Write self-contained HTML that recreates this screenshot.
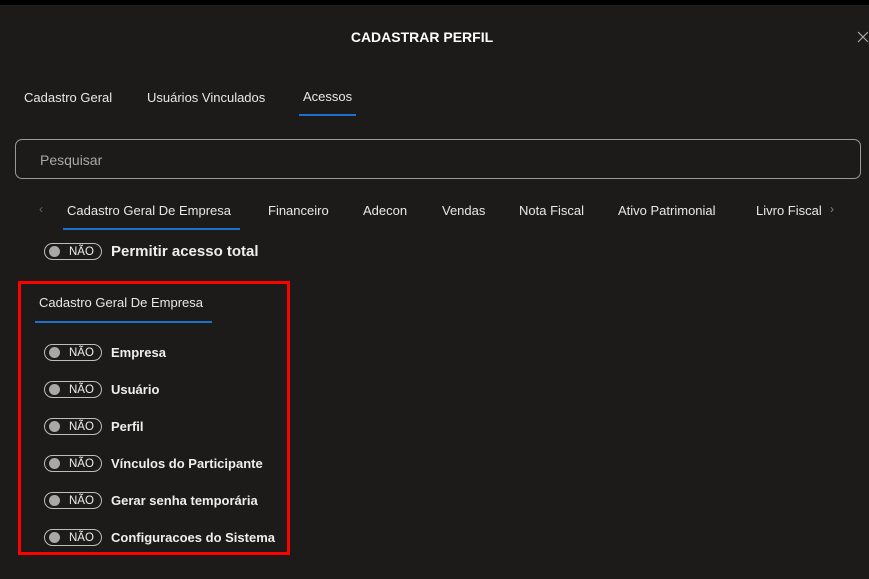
<!DOCTYPE html>
<html><head><meta charset="utf-8"><style>
*{margin:0;padding:0;box-sizing:border-box}
body{width:869px;height:579px;background:#1d1b1a;position:relative;overflow:hidden;font-family:"Liberation Sans",sans-serif;color:#e8e8e8}
.a{position:absolute;white-space:nowrap}
.t{font-size:13px}
.tg{position:absolute;width:58px;height:17px;border:1px solid #bdbdbd;border-radius:9px}
.tg:before{content:"";position:absolute;left:4px;top:2px;width:11px;height:11px;border-radius:50%;background:#a8a8a8}
.tg span{position:absolute;left:24px;top:2px;font-size:11.5px;line-height:12px;color:#eee}
.lb{position:absolute;font-size:13px;font-weight:bold;color:#eee;white-space:nowrap}
</style></head><body>
<div class="a" style="left:0;top:0;width:869px;height:5px;background:#000"></div>
<div class="a" style="left:0;top:29px;width:844px;text-align:center;font-size:14px;font-weight:bold;color:#fff">CADASTRAR PERFIL</div>
<svg class="a" style="left:857px;top:31px" width="12" height="12"><path d="M1 1L11 11M11 1L1 11" stroke="#aaa" stroke-width="1.2"/></svg>
<div class="a t" style="left:24px;top:90px">Cadastro Geral</div>
<div class="a t" style="left:147px;top:90px">Usuários Vinculados</div>
<div class="a t" style="left:303px;top:89px">Acessos</div>
<div class="a" style="left:299px;top:114px;width:57px;height:2px;background:#1a73c8"></div>
<div class="a" style="left:15px;top:139px;width:846px;height:40px;border:1px solid #9a9a9a;border-radius:7px"></div>
<div class="a" style="left:40px;top:152px;font-size:14px;color:#a9a9a9">Pesquisar</div>
<div class="a" style="left:39px;top:202px;font-size:12px;color:#666">‹</div>
<div class="a t" style="left:67px;top:203px">Cadastro Geral De Empresa</div>
<div class="a" style="left:63px;top:228px;width:177px;height:2px;background:#1a73c8"></div>
<div class="a t" style="left:268px;top:203px">Financeiro</div>
<div class="a t" style="left:363px;top:203px">Adecon</div>
<div class="a t" style="left:442px;top:203px">Vendas</div>
<div class="a t" style="left:519px;top:203px">Nota Fiscal</div>
<div class="a t" style="left:618px;top:203px">Ativo Patrimonial</div>
<div class="a t" style="left:756px;top:203px">Livro Fiscal</div>
<div class="a" style="left:830px;top:202px;font-size:12px;color:#888">›</div>
<div class="tg" style="left:44px;top:243px"><span>NÃO</span></div>
<div class="lb" style="left:111px;top:243px;font-size:15px">Permitir acesso total</div>
<div class="a" style="left:18px;top:281px;width:272px;height:274px;border:3px solid #ff0000"></div>
<div class="a t" style="left:39px;top:295px">Cadastro Geral De Empresa</div>
<div class="a" style="left:35px;top:321px;width:177px;height:2px;background:#1a73c8"></div>
<div class="tg" style="left:44px;top:344px"><span>NÃO</span></div><div class="lb" style="left:111px;top:345px">Empresa</div>
<div class="tg" style="left:44px;top:381px"><span>NÃO</span></div><div class="lb" style="left:111px;top:382px">Usuário</div>
<div class="tg" style="left:44px;top:418px"><span>NÃO</span></div><div class="lb" style="left:111px;top:419px">Perfil</div>
<div class="tg" style="left:44px;top:455px"><span>NÃO</span></div><div class="lb" style="left:111px;top:456px">Vínculos do Participante</div>
<div class="tg" style="left:44px;top:492px"><span>NÃO</span></div><div class="lb" style="left:111px;top:493px">Gerar senha temporária</div>
<div class="tg" style="left:44px;top:529px"><span>NÃO</span></div><div class="lb" style="left:111px;top:530px">Configuracoes do Sistema</div>
</body></html>
